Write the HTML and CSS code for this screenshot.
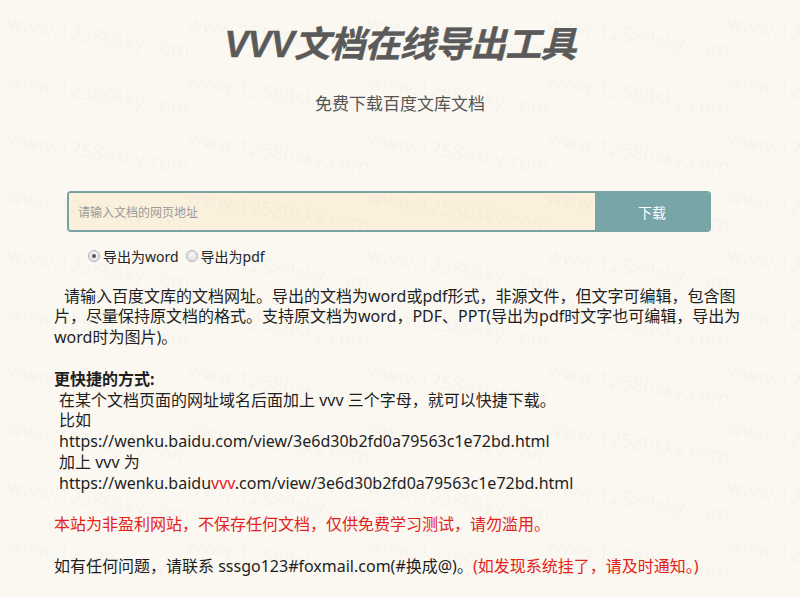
FILE: index.html
```html
<!DOCTYPE html>
<html lang="zh-CN">
<head>
<meta charset="utf-8">
<title>VVV文档在线导出工具</title>
<link rel="stylesheet" href="styles.css">
</head>
<body>
<div class="page">
  <header class="head">
    <h1 class="title">VVV文档在线导出工具</h1>
    <p class="subtitle">免费下载百度文库文档</p>
  </header>

  <form class="search">
    <input class="search-input" type="text" placeholder="请输入文档的网页地址">
    <button class="search-btn" type="button">下载</button>
  </form>

  <div class="options">
    <label class="opt"><input class="radio" type="radio" name="fmt" checked>导出为word</label>
    <label class="opt"><input class="radio" type="radio" name="fmt">导出为pdf</label>
  </div>

  <div class="content">
    <p class="line indent2">请输入百度文库的文档网址。导出的文档为word或pdf形式，非源文件，但文字可编辑，包含图<br>片，尽量保持原文档的格式。支持原文档为word，PDF、PPT(导出为pdf时文字也可编辑，导出为<br>word时为图片)。</p>
    <p class="line blank"></p>
    <p class="line strong">更快捷的方式:</p>
    <p class="line indent1">在某个文档页面的网址域名后面加上 vvv 三个字母，就可以快捷下载。</p>
    <p class="line indent1">比如</p>
    <p class="line indent1">https://wenku.baidu.com/view/3e6d30b2fd0a79563c1e72bd.html</p>
    <p class="line indent1">加上 vvv 为</p>
    <p class="line indent1">https://wenku.baidu<span class="red">vvv</span>.com/view/3e6d30b2fd0a79563c1e72bd.html</p>
    <p class="line blank"></p>
    <p class="line red">本站为非盈利网站，不保存任何文档，仅供免费学习测试，请勿滥用。</p>
    <p class="line blank"></p>
    <p class="line">如有任何问题，请联系 sssgo123#foxmail.com(#换成@)。<span class="red">(如发现系统挂了，请及时通知。)</span></p>
  </div>

  <div class="watermark" aria-hidden="true">
    <span>www.12580sky.com</span><span>www.12580sky.com</span><span>www.12580sky.com</span><span>www.12580sky.com</span><span>www.12580sky.com</span>
    <span>www.12580sky.com</span><span>www.12580sky.com</span><span>www.12580sky.com</span><span>www.12580sky.com</span><span>www.12580sky.com</span>
    <span>www.12580sky.com</span><span>www.12580sky.com</span><span>www.12580sky.com</span><span>www.12580sky.com</span><span>www.12580sky.com</span>
    <span>www.12580sky.com</span><span>www.12580sky.com</span><span>www.12580sky.com</span><span>www.12580sky.com</span><span>www.12580sky.com</span>
    <span>www.12580sky.com</span><span>www.12580sky.com</span><span>www.12580sky.com</span><span>www.12580sky.com</span><span>www.12580sky.com</span>
    <span>www.12580sky.com</span><span>www.12580sky.com</span><span>www.12580sky.com</span><span>www.12580sky.com</span><span>www.12580sky.com</span>
    <span>www.12580sky.com</span><span>www.12580sky.com</span><span>www.12580sky.com</span><span>www.12580sky.com</span><span>www.12580sky.com</span>
    <span>www.12580sky.com</span><span>www.12580sky.com</span><span>www.12580sky.com</span><span>www.12580sky.com</span><span>www.12580sky.com</span>
    <span>www.12580sky.com</span><span>www.12580sky.com</span><span>www.12580sky.com</span><span>www.12580sky.com</span><span>www.12580sky.com</span>
    <span>www.12580sky.com</span><span>www.12580sky.com</span><span>www.12580sky.com</span><span>www.12580sky.com</span><span>www.12580sky.com</span>
    <span>www.12580sky.com</span><span>www.12580sky.com</span><span>www.12580sky.com</span><span>www.12580sky.com</span><span>www.12580sky.com</span>
  </div>
</div>
</body>
</html>
```
FILE: styles.css
```css
html, body {
  margin: 0;
  padding: 0;
  background: #faf8f1;
}
body {
  font-family: "Noto Sans", "Noto Sans CJK SC", sans-serif;
  color: #1e1e1e;
  overflow: hidden;
}
.page {
  position: relative;
  width: 800px;
  height: 597px;
  overflow: hidden;
}
.head {
  text-align: center;
}
.title {
  margin: 20px 0 0;
  font-size: 36px;
  line-height: 50px;
  font-weight: 700;
  font-style: italic;
  color: #5a5a5a;
  font-family: "Liberation Sans", "Noto Sans CJK SC", sans-serif;
  letter-spacing: -0.8px;
  -webkit-text-stroke: 0.4px #5a5a5a;
}
.subtitle {
  margin: 21px 0 0;
  font-size: 17px;
  line-height: 24px;
  color: #555;
  font-family: "Noto Sans CJK SC", sans-serif;
}
.search {
  display: flex;
  margin: 76px 0 0 67px;
  width: 644px;
  height: 41px;
  box-sizing: border-box;
  border: 2px solid #79a3a3;
  border-radius: 4px;
  overflow: hidden;
}
.search-input {
  flex: 1;
  border: 0;
  outline: 0;
  margin: 0;
  padding: 0 0 0 9px;
  background: #faf0dc;
  font-size: 12px;
  font-family: "Noto Sans CJK SC", sans-serif;
  color: #333;
}
.search-input::placeholder {
  color: #9a9a9a;
}
.search-btn {
  width: 114px;
  border: 0;
  margin: 0;
  padding: 0;
  background: #78a6a8;
  color: #fff;
  font-size: 14px;
  font-family: "Noto Sans CJK SC", sans-serif;
}
.options {
  display: flex;
  gap: 7px;
  margin: 14px 0 0 88px;
  height: 20px;
  align-items: center;
  font-size: 14px;
  color: #222;
}
.opt {
  display: flex;
  align-items: center;
}
.radio {
  appearance: none;
  -webkit-appearance: none;
  width: 12px;
  height: 12px;
  margin: 0 3px 0 0;
  border: 1px solid #b0b0b0;
  border-radius: 50%;
  background: radial-gradient(circle at 50% 40%, #fafafa, #d8d8d8);
  box-sizing: border-box;
  position: relative;
}
.radio:checked::after {
  content: "";
  position: absolute;
  left: 3px;
  top: 3px;
  width: 4px;
  height: 4px;
  border-radius: 50%;
  background: #555;
}
.content {
  margin: 19.6px 0 0 54px;
  width: 740px;
  font-size: 16px;
  line-height: 20.8px;
  white-space: nowrap;
}
.line {
  margin: 0;
}
.blank {
  height: 20.8px;
}
.indent2 {
  text-indent: 10px;
}
.indent1 {
  padding-left: 5px;
}
.strong {
  font-weight: 700;
}
.red {
  color: #e3231b;
}
.watermark {
  position: absolute;
  left: 5px;
  top: 8px;
  display: grid;
  grid-template-columns: repeat(5, 180px);
  grid-auto-rows: 58px;
  pointer-events: none;
  font-family: "Open Sans", sans-serif;
  font-size: 20px;
  color: rgba(110, 100, 90, 0.045);
  white-space: nowrap;
}
.watermark span {
  display: block;
  transform: rotate(9deg);
  transform-origin: left center;
}
```
